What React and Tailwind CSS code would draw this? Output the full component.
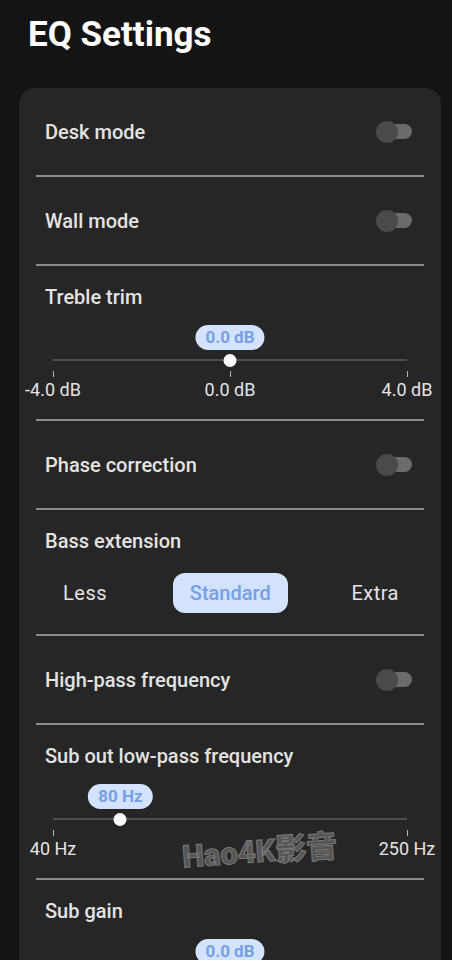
import React from "react";

const font = { fontFamily: "Roboto, 'Noto Sans', sans-serif" };

function Toggle() {
  return (
    <div className="relative w-[36px] h-[22px] flex items-center">
      <div className="absolute right-0 w-[32px] h-[15px] rounded-full bg-[#6b6b6b]" />
      <div className="absolute left-0 w-[22px] h-[22px] rounded-full bg-[#4a4a4a]" />
    </div>
  );
}

function Divider() {
  return <div className="h-[2px] bg-[#8c8c8c]" />;
}

function ToggleRow({ label }) {
  return (
    <div className="h-[87px] flex items-center justify-between pl-[9px] pr-[12px]">
      <span className="text-[20px] leading-[24px] font-medium text-[#e3e3e3]">{label}</span>
      <Toggle />
    </div>
  );
}

function Slider({ label, value, min, max, valueLabel, ticks, last }) {
  const pct = ((value - min) / (max - min)) * 100;
  return (
    <div className={last ? "" : "pb-[19px]"}>
      <div className="pl-[9px] pt-[19px] text-[20px] leading-[24px] font-medium text-[#e3e3e3]">{label}</div>
      <div className="relative mx-[17px] mt-[16px] h-[75px]">
        <div
          className="absolute top-0 -translate-x-1/2 h-[25px] px-[10px] rounded-full bg-[#d3e3fd] text-[#76a0e2] text-[17px] leading-[25px] font-bold whitespace-nowrap"
          style={{ left: pct + "%" }}
        >
          {valueLabel}
        </div>
        <div className="absolute left-0 right-0 top-[34px] h-[2px] bg-[#4f4f4f]" />
        <div
          className="absolute top-[29px] w-[13px] h-[13px] -translate-x-1/2 rounded-full bg-white"
          style={{ left: pct + "%" }}
        />
        {ticks.map((t) => {
          const p = ((t.v - min) / (max - min)) * 100;
          return (
            <React.Fragment key={t.v}>
              <div className="absolute top-[46px] w-px h-[6px] bg-[#b5b5b5]" style={{ left: p + "%" }} />
              <div
                className="absolute top-[54px] -translate-x-1/2 text-[18px] leading-[22px] text-[#e3e3e3] whitespace-nowrap"
                style={{ left: p + "%" }}
              >
                {t.l}
              </div>
            </React.Fragment>
          );
        })}
      </div>
    </div>
  );
}

export default function App() {
  return (
    <div className="relative w-[452px] h-[960px] overflow-hidden bg-[#141414]" style={font}>
      <div className="pl-[28px] pt-[15px] text-[35px] leading-[40px] font-bold text-white">EQ Settings</div>
      <div className="mt-[33px] ml-[19px] mr-[11px] rounded-[16px] bg-[#262626] px-[17px] h-[900px]">
        <ToggleRow label="Desk mode" />
        <Divider />
        <ToggleRow label="Wall mode" />
        <Divider />
        <Slider
          label="Treble trim"
          value={0}
          min={-4}
          max={4}
          valueLabel="0.0 dB"
          ticks={[
            { v: -4, l: "-4.0 dB" },
            { v: 0, l: "0.0 dB" },
            { v: 4, l: "4.0 dB" },
          ]}
        />
        <Divider />
        <ToggleRow label="Phase correction" />
        <Divider />
        <div className="pb-[21px]">
          <div className="pl-[9px] pt-[19px] text-[20px] leading-[24px] font-medium text-[#e3e3e3]">Bass extension</div>
          <div className="mt-[20px] flex items-center justify-between px-[9px]">
            <div className="h-[40px] px-[18px] flex items-center text-[20px] tracking-[0.5px] text-[#e3e3e3]">Less</div>
            <div className="h-[40px] px-[17px] flex items-center rounded-[12px] bg-[#d3e3fd] text-[20px] font-medium text-[#76a0e2]">Standard</div>
            <div className="h-[40px] px-[16px] flex items-center text-[20px] tracking-[0.5px] text-[#e3e3e3]">Extra</div>
          </div>
        </div>
        <Divider />
        <ToggleRow label="High-pass frequency" />
        <Divider />
        <Slider
          label="Sub out low-pass frequency"
          value={80}
          min={40}
          max={250}
          valueLabel="80 Hz"
          ticks={[
            { v: 40, l: "40 Hz" },
            { v: 250, l: "250 Hz" },
          ]}
        />
        <Divider />
        <Slider
          label="Sub gain"
          value={0}
          min={-10}
          max={10}
          valueLabel="0.0 dB"
          ticks={[]}
          last
        />
      </div>
      <div className="absolute left-[182px] top-[834px] -rotate-[4deg] text-[31px] leading-[36px] font-black text-[#565656] [-webkit-text-stroke:1px_#767676] whitespace-nowrap" style={{ fontFamily: "Roboto, 'Noto Sans CJK SC', sans-serif" }}>
        Hao4K影音
      </div>
    </div>
  );
}
